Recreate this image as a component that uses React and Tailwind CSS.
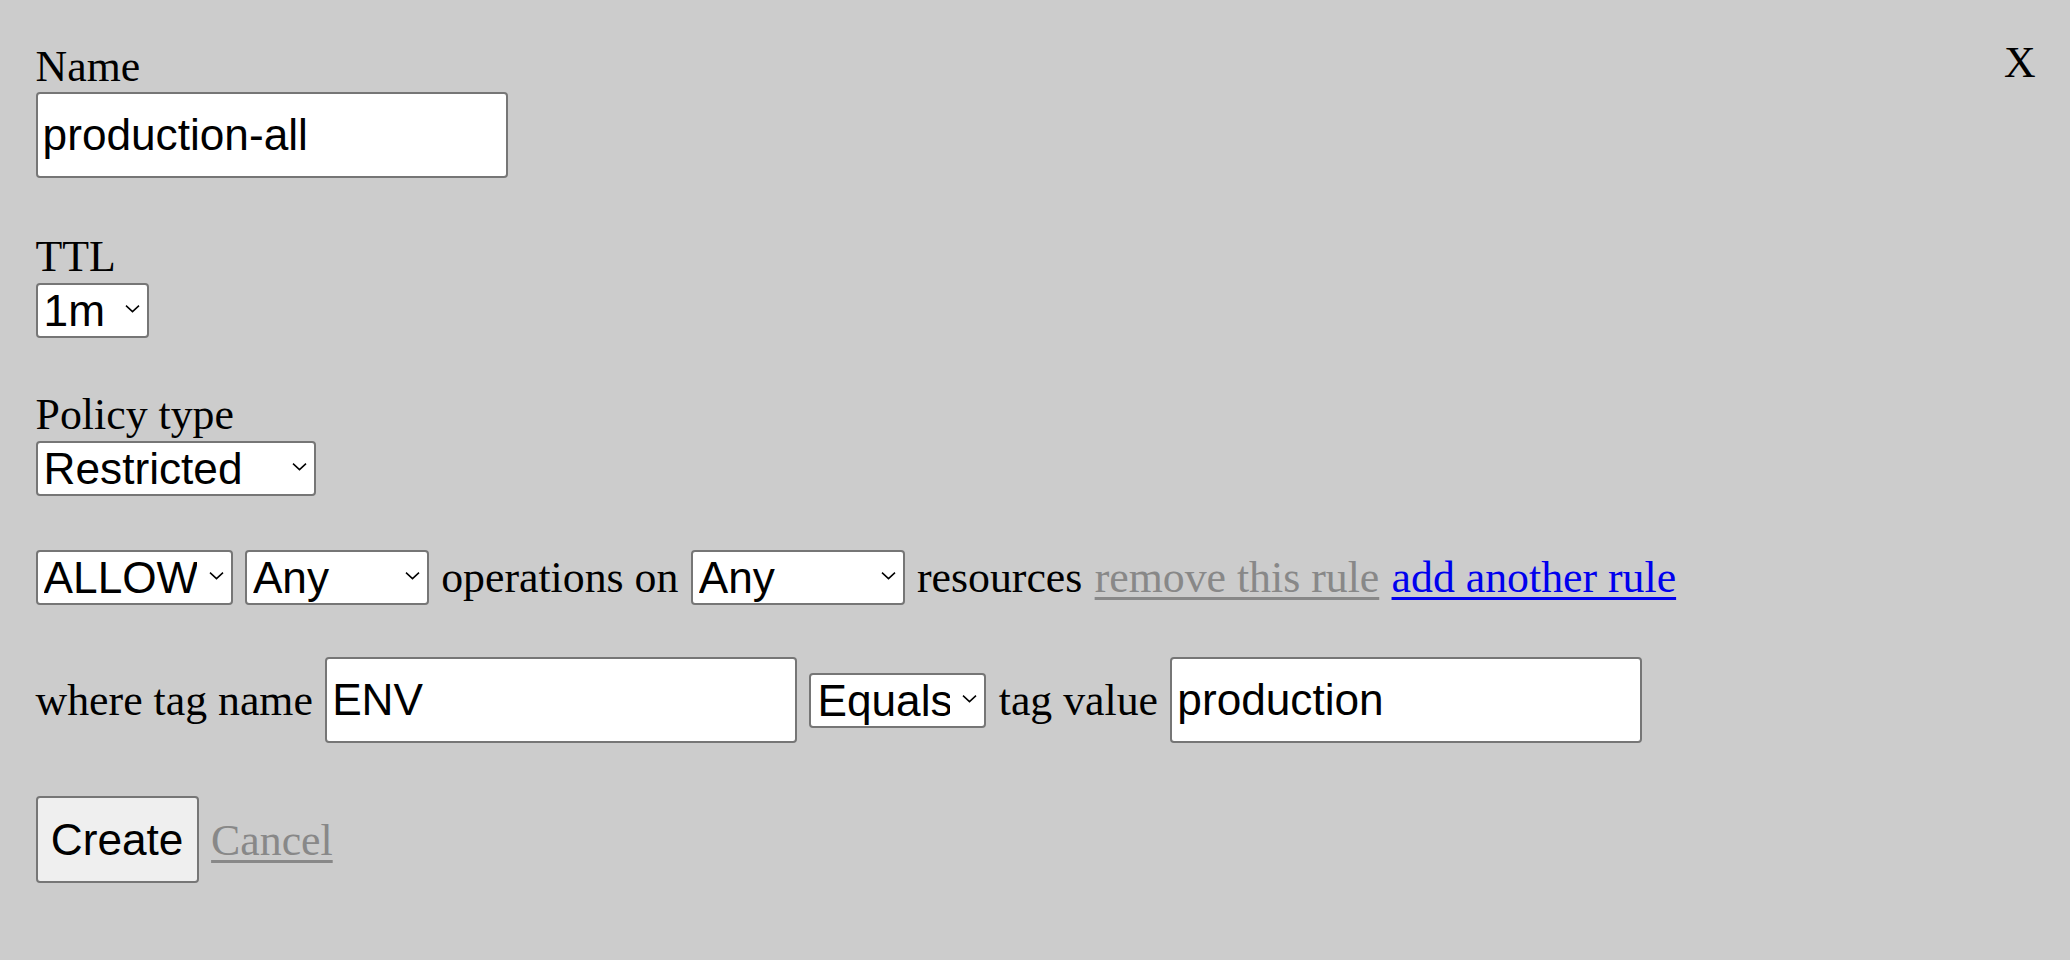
import { useState } from 'react';

const ctl = "font-['Liberation_Sans',Arial,sans-serif] text-[44.2px] leading-[normal] text-black";

function Chevron() {
  return (
    <svg
      width="15"
      height="9"
      viewBox="0 0 15 9"
      className="pointer-events-none absolute right-[9px] top-1/2 -translate-y-[65%]"
    >
      <polyline points="1,1.5 7.5,7.5 14,1.5" fill="none" stroke="#000" strokeWidth="1.5" />
    </svg>
  );
}

function Select({ width, value, onChange, options }) {
  return (
    <span className={`relative inline-flex shrink-0 ${width}`}>
      <select
        value={value}
        onChange={(e) => onChange(e.target.value)}
        className={`appearance-none w-full h-[55px] bg-white border-2 border-[#767676] rounded-[4px] pl-[6px] pr-[34px] ${ctl}`}
      >
        {options.map((o) => (
          <option key={o}>{o}</option>
        ))}
      </select>
      <Chevron />
    </span>
  );
}

function TextInput({ value, onChange }) {
  return (
    <input
      value={value}
      onChange={(e) => onChange(e.target.value)}
      className={`w-[472px] h-[86px] shrink-0 bg-white border-2 border-[#767676] rounded-[4px] pl-[5px] ${ctl}`}
    />
  );
}

export default function App() {
  const [name, setName] = useState('production-all');
  const [ttl, setTtl] = useState('1m');
  const [policyType, setPolicyType] = useState('Restricted');
  const [effect, setEffect] = useState('ALLOW');
  const [operation, setOperation] = useState('Any');
  const [resource, setResource] = useState('Any');
  const [tagName, setTagName] = useState('ENV');
  const [matcher, setMatcher] = useState('Equals');
  const [tagValue, setTagValue] = useState('production');

  return (
    <div className="min-h-screen bg-[#cccccc] flex justify-between pl-[35.6px] pr-[34.4px] pt-[37px] font-['Liberation_Serif','Times_New_Roman',serif] text-[43.8px] leading-[normal] text-black">
      <form className="flex flex-col gap-[52.8px] pt-[4.3px]" onSubmit={(e) => e.preventDefault()}>
        {/* Name */}
        <label className="flex flex-col items-start gap-[1px]">
          <span>Name</span>
          <TextInput value={name} onChange={setName} />
        </label>

        {/* TTL */}
        <label className="flex flex-col items-start gap-[1.5px]">
          <span>TTL</span>
          <Select width="w-[113.5px]" value={ttl} onChange={setTtl} options={['1m', '5m', '1h', '1d']} />
        </label>

        {/* Policy type */}
        <label className="flex flex-col items-start gap-[2px] -mt-[1.5px]">
          <span>Policy type</span>
          <Select
            width="w-[280px]"
            value={policyType}
            onChange={setPolicyType}
            options={['Restricted', 'Unrestricted']}
          />
        </label>

        {/* Rule */}
        <div className="flex items-center gap-[12.3px] whitespace-nowrap mt-[1px]">
          <Select width="w-[197px]" value={effect} onChange={setEffect} options={['ALLOW', 'DENY']} />
          <Select width="w-[184px]" value={operation} onChange={setOperation} options={['Any', 'Read', 'Write']} />
          <span>operations on</span>
          <Select width="w-[214px]" value={resource} onChange={setResource} options={['Any', 'Database', 'Server']} />
          <span>resources</span>
          <a href="#" className="text-[#888888] underline decoration-[3px] underline-offset-[5px]">
            remove this rule
          </a>
          <a href="#" className="text-[#0000ee] underline decoration-[3px] underline-offset-[5px]">
            add another rule
          </a>
        </div>

        {/* Tag condition */}
        <div className="flex items-center gap-[12.3px] whitespace-nowrap">
          <span>where tag name</span>
          <TextInput value={tagName} onChange={setTagName} />
          <Select width="w-[177px]" value={matcher} onChange={setMatcher} options={['Equals', 'Not equals']} />
          <span>tag value</span>
          <TextInput value={tagValue} onChange={setTagValue} />
        </div>

        {/* Actions */}
        <div className="flex items-center gap-[12.5px]">
          <button
            type="submit"
            className={`w-[163px] h-[87px] bg-[#efefef] border-2 border-[#767676] rounded-[4px] ${ctl}`}
          >
            Create
          </button>
          <a href="#" className="text-[#888888] underline decoration-[3px] underline-offset-[5px]">
            Cancel
          </a>
        </div>
      </form>

      <button className="self-start leading-[normal]">X</button>
    </div>
  );
}
